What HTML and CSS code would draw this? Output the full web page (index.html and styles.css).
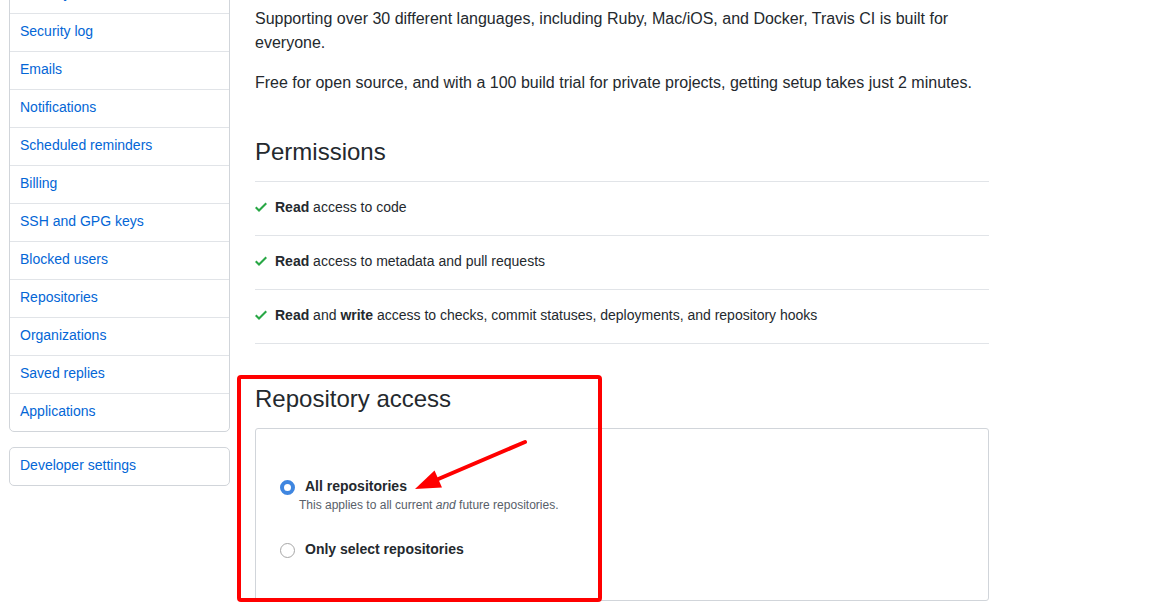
FILE: index.html
```html
<!DOCTYPE html>
<html lang="en">
<head>
<meta charset="utf-8">
<title>Travis CI - Install</title>
<link rel="stylesheet" href="styles.css">
</head>
<body>
<div class="page">
  <nav class="sidebar">
    <div class="menu">
      <a class="menu-item" href="#">Security</a>
      <a class="menu-item" href="#">Security log</a>
      <a class="menu-item" href="#">Emails</a>
      <a class="menu-item" href="#">Notifications</a>
      <a class="menu-item" href="#">Scheduled reminders</a>
      <a class="menu-item" href="#">Billing</a>
      <a class="menu-item" href="#">SSH and GPG keys</a>
      <a class="menu-item" href="#">Blocked users</a>
      <a class="menu-item" href="#">Repositories</a>
      <a class="menu-item" href="#">Organizations</a>
      <a class="menu-item" href="#">Saved replies</a>
      <a class="menu-item" href="#">Applications</a>
    </div>
    <div class="menu menu-dev">
      <a class="menu-item" href="#">Developer settings</a>
    </div>
  </nav>

  <main class="main">
    <p class="lead">Supporting over 30 different languages, including Ruby, Mac/iOS, and Docker, Travis CI is built for everyone.</p>
    <p class="lead">Free for open source, and with a 100 build trial for private projects, getting setup takes just 2 minutes.</p>

    <h2 class="subhead">Permissions</h2>
    <ul class="perms">
      <li class="perm">
        <svg class="check" viewBox="0 0 12 16" width="12" height="16"><path d="M12 5l-8 8-4-4 1.5-1.5L4 10l6.5-6.5L12 5z"/></svg>
        <span><strong>Read</strong> access to code</span>
      </li>
      <li class="perm">
        <svg class="check" viewBox="0 0 12 16" width="12" height="16"><path d="M12 5l-8 8-4-4 1.5-1.5L4 10l6.5-6.5L12 5z"/></svg>
        <span><strong>Read</strong> access to metadata and pull requests</span>
      </li>
      <li class="perm">
        <svg class="check" viewBox="0 0 12 16" width="12" height="16"><path d="M12 5l-8 8-4-4 1.5-1.5L4 10l6.5-6.5L12 5z"/></svg>
        <span><strong>Read</strong> and <strong>write</strong> access to checks, commit statuses, deployments, and repository hooks</span>
      </li>
    </ul>

    <h2 class="subhead-plain">Repository access</h2>
    <div class="box">
      <div class="option">
        <div class="option-row">
          <span class="radio radio-on"></span>
          <span class="option-label">All repositories</span>
        </div>
        <div class="option-note">This applies to all current <em>and</em> future repositories.</div>
      </div>
      <div class="option option-second">
        <div class="option-row">
          <span class="radio"></span>
          <span class="option-label">Only select repositories</span>
        </div>
      </div>
    </div>
  </main>
</div>

<div class="annot-box"></div>
<svg class="annot-arrow" width="1151" height="616" viewBox="0 0 1151 616">
  <line x1="525" y1="442" x2="436" y2="480" stroke="#ff0000" stroke-width="4" stroke-linecap="round"/>
  <polygon points="415,489 434.5,470.5 442,487.5" fill="#ff0000"/>
</svg>
</body>
</html>
```

FILE: styles.css
```css
html, body {
  margin: 0;
  padding: 0;
  background: #ffffff;
  overflow: hidden;
}

body {
  font-family: "Liberation Sans", Arial, Helvetica, sans-serif;
  font-size: 14px;
  line-height: 1.5;
  color: #24292e;
  width: 1151px;
  height: 616px;
}

.page {
  display: flex;
  align-items: flex-start;
  gap: 25px;
  margin-top: -25px;
  padding-left: 9px;
}

.sidebar {
  width: 221px;
  flex: none;
  display: flex;
  flex-direction: column;
  gap: 15px;
}

.menu {
  border: 1px solid #d1d5da;
  border-radius: 5px;
  display: flex;
  flex-direction: column;
}

.menu-item {
  display: block;
  padding: 7px 10px 9px;
  line-height: 21px;
  font-size: 14px;
  color: #0366d6;
  text-decoration: none;
  border-top: 1px solid #e1e4e8;
}

.menu-item:first-child {
  border-top: none;
}

.main {
  width: 734px;
  flex: none;
  padding-top: 32px;
}

.lead {
  margin: 0 0 16px;
  font-size: 16px;
  line-height: 24px;
}

.subhead {
  margin: 39px 0 0;
  padding-bottom: 11px;
  font-size: 24px;
  font-weight: 400;
  line-height: 36px;
  border-bottom: 1px solid #e1e4e8;
}

.perms {
  list-style: none;
  margin: 0;
  padding: 0;
}

.perm {
  display: flex;
  align-items: flex-start;
  gap: 8px;
  padding: 15px 0 17px;
  line-height: 21px;
  border-bottom: 1px solid #e1e4e8;
}

.check {
  flex: none;
  fill: #28a745;
  margin-top: 2px;
}

.subhead-plain {
  margin: 37px 0 11px;
  font-size: 24px;
  font-weight: 400;
  line-height: 36px;
}

.box {
  border: 1px solid #d1d5da;
  border-radius: 3px;
  padding: 47px 24px 40px;
}

.option-second {
  margin-top: 26px;
}

.option-row {
  display: flex;
  align-items: flex-start;
  gap: 10px;
}

.radio {
  flex: none;
  width: 15px;
  height: 15px;
  margin-top: 4px;
  box-sizing: border-box;
  border-radius: 50%;
  border: 1px solid #a6a6a6;
  background: #ffffff;
}

.radio-on {
  border: 4.5px solid #3f86e0;
  background: #ffffff;
}

.option-label {
  font-weight: 700;
  font-size: 14px;
  line-height: 21px;
}

.option-note {
  margin-left: 19px;
  font-size: 12px;
  line-height: 16px;
  color: #586069;
}

.annot-box {
  position: absolute;
  left: 237px;
  top: 375px;
  width: 365px;
  height: 227px;
  box-sizing: border-box;
  border: 4px solid #ff0000;
  border-radius: 4px;
  pointer-events: none;
}

.annot-arrow {
  position: absolute;
  left: 0;
  top: 0;
  pointer-events: none;
}
```
